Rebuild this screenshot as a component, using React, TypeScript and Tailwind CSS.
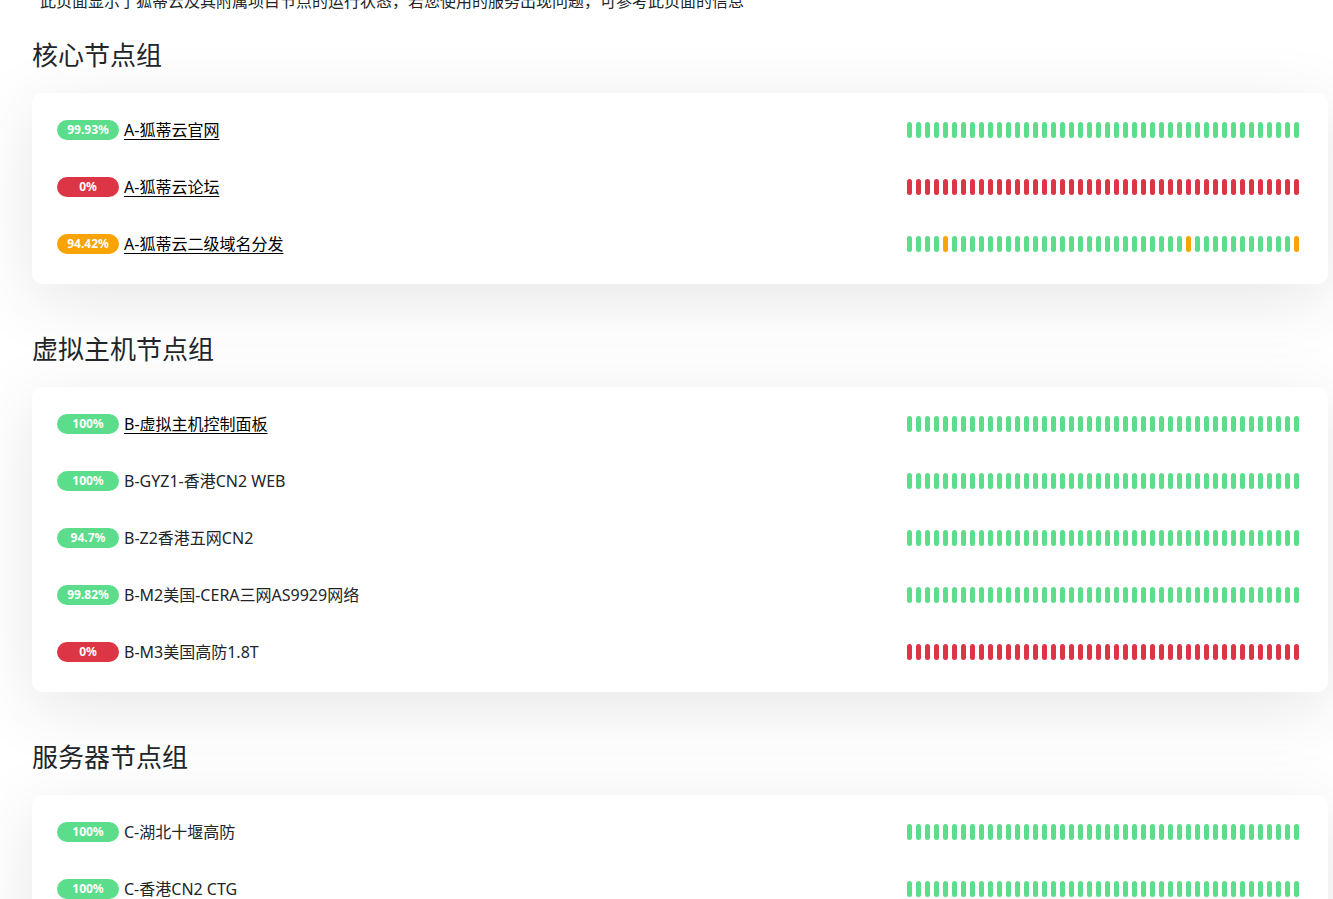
import React from "react";

type Status = "up" | "down" | "warn";

type Monitor = {
  name: string;
  uptime: string;
  status: Status;
  link?: boolean;
  warnAt?: number[];
};

type Group = {
  title: string;
  monitors: Monitor[];
};

const BEATS = 44;

const groups: Group[] = [
  {
    title: "核心节点组",
    monitors: [
      { name: "A-狐蒂云官网", uptime: "99.93%", status: "up", link: true },
      { name: "A-狐蒂云论坛", uptime: "0%", status: "down", link: true },
      {
        name: "A-狐蒂云二级域名分发",
        uptime: "94.42%",
        status: "warn",
        link: true,
        warnAt: [4, 31, 43],
      },
    ],
  },
  {
    title: "虚拟主机节点组",
    monitors: [
      { name: "B-虚拟主机控制面板", uptime: "100%", status: "up", link: true },
      { name: "B-GYZ1-香港CN2 WEB", uptime: "100%", status: "up" },
      { name: "B-Z2香港五网CN2", uptime: "94.7%", status: "up" },
      { name: "B-M2美国-CERA三网AS9929网络", uptime: "99.82%", status: "up" },
      { name: "B-M3美国高防1.8T", uptime: "0%", status: "down" },
    ],
  },
  {
    title: "服务器节点组",
    monitors: [
      { name: "C-湖北十堰高防", uptime: "100%", status: "up" },
      { name: "C-香港CN2 CTG", uptime: "100%", status: "up" },
      { name: "C-香港CN2 GIA", uptime: "100%", status: "up" },
    ],
  },
];

const badgeColor: Record<Status, string> = {
  up: "bg-[#5cdd8b]",
  down: "bg-[#dc3545]",
  warn: "bg-[#f8a306]",
};

// heartbeat strip on the right side of each row
const Beats = ({ monitor }: { monitor: Monitor }) => {
  return (
    <div className="flex gap-[4px]">
      {Array.from({ length: BEATS }).map((_, i) => {
        let color = monitor.status === "down" ? "bg-[#dc3545]" : "bg-[#5cdd8b]";
        if (monitor.warnAt?.includes(i)) color = "bg-[#f8a306]";
        return <div key={i} className={`w-[5px] h-[16px] rounded-full ${color}`} />;
      })}
    </div>
  );
};

const MonitorRow = ({ monitor }: { monitor: Monitor }) => (
  <div className="h-[57px] flex items-center justify-between">
    <div className="flex items-center gap-[5px]">
      <span
        className={`w-[62px] h-[20px] rounded-full flex items-center justify-center text-white text-[12px] font-bold leading-none ${badgeColor[monitor.status]}`}
      >
        {monitor.uptime}
      </span>
      {monitor.link ? (
        <a className="text-[16px] text-black underline underline-offset-[3px] cursor-pointer">
          {monitor.name}
        </a>
      ) : (
        <span className="text-[16px] text-[#212529]">{monitor.name}</span>
      )}
    </div>
    <Beats monitor={monitor} />
  </div>
);

const App = () => {
  return (
    <div
      className="min-h-screen bg-white overflow-hidden text-[#212529]"
      style={{ fontFamily: '"Noto Sans", "Noto Sans CJK SC", sans-serif' }}
    >
      <p className="pl-[40px] text-[16px] leading-[24px] -mt-[11px]">
        此页面显示了狐蒂云及其附属项目节点的运行状态，若您使用的服务出现问题，可参考此页面的信息
      </p>

      <div className="pl-[32px] pr-[5px] pt-[26px]">
        {groups.map((group, gi) => (
          <div key={group.title} className={gi > 0 ? "mt-[49px]" : ""}>
            <h2 className="text-[26px] leading-[32px] font-normal text-[#212529] mb-[22px]">
              {group.title}
            </h2>
            <div className="bg-white rounded-[10px] shadow-[0_15px_70px_rgba(0,0,0,0.1)] pt-[8px] pb-[12px] pl-[25px] pr-[29px]">
              {group.monitors.map((m) => (
                <MonitorRow key={m.name} monitor={m} />
              ))}
            </div>
          </div>
        ))}
      </div>
    </div>
  );
};

export default App;
